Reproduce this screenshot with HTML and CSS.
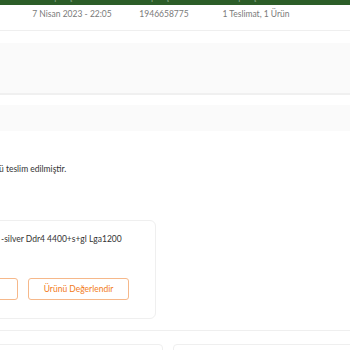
FILE: index.html
```html
<!DOCTYPE html>
<html lang="tr">
<head>
<meta charset="utf-8">
<link rel="stylesheet" href="styles.css">
</head>
<body>
<div class="summary">
  <div class="summary-head">
    <span>Sipariş Tarihi</span>
    <span>Sipariş No</span>
    <span>Sipariş Özeti</span>
  </div>
  <div class="summary-values">
    <span>7 Nisan 2023 - 22:05</span>
    <span>1946658775</span>
    <span>1 Teslimat, 1 Ürün</span>
  </div>
</div>
<div class="band band-tall"></div>
<div class="band band-short"></div>
<p class="status">ü teslim edilmiştir.</p>
<div class="product-card">
  <p class="product-name">-silver Ddr4 4400+s+gl Lga1200</p>
  <div class="actions">
    <button class="btn btn-cut">Kargo Takip</button>
    <button class="btn">Ürünü Değerlendir</button>
  </div>
</div>
<div class="divider"></div>
<div class="bottom-cards">
  <div class="mini-card mini-left"></div>
  <div class="mini-card mini-right"></div>
</div>
</body>
</html>
```
FILE: styles.css
```css
html, body {
  margin: 0;
  padding: 0;
  background: #ffffff;
  font-family: Lato, "Open Sans", sans-serif;
  overflow: hidden;
  width: 350px;
  height: 350px;
}

.summary {
  border-bottom: 1px solid #efefef;
}

.summary-head {
  background: #2c5d28;
  height: 24px;
  margin-top: -19px;
  display: grid;
  grid-template-columns: repeat(3, 92px);
  padding-left: 26px;
  align-items: end;
  font-size: 9px;
  line-height: 12px;
  color: rgba(255, 255, 255, 0.45);
  text-align: center;
  padding-bottom: 2px;
  box-sizing: border-box;
}

.summary-values {
  display: grid;
  grid-template-columns: repeat(3, 92px);
  padding-left: 26px;
  height: 25px;
  box-sizing: border-box;
  padding-top: 4px;
  font-size: 8.5px;
  line-height: 11px;
  color: #7a7a7a;
  text-align: center;
}

.band {
  background: #fafafa;
}

.band-tall {
  margin-top: 12px;
  height: 50px;
  border-bottom: 2px solid #f0f0f0;
}

.band-short {
  margin-top: 10px;
  height: 26px;
}

.status {
  margin: 32px 0 0 -1px;
  font-size: 8.5px;
  line-height: 12px;
  color: #333333;
}

.product-card {
  margin-top: 45px;
  margin-left: -10px;
  width: 166px;
  height: 99px;
  box-sizing: border-box;
  border: 1px solid #efefef;
  border-radius: 6px;
  padding: 12px 0 0 10px;
  display: flex;
  flex-direction: column;
}

.product-name {
  margin: 0;
  font-size: 8.5px;
  line-height: 12px;
  color: #333333;
}

.actions {
  margin-top: 33px;
  display: flex;
  gap: 10px;
  margin-left: -80px;
}

.btn {
  flex-shrink: 0;
  height: 22px;
  width: 101px;
  border: 1px solid #f6b88a;
  border-radius: 3px;
  background: #ffffff;
  color: #f27a1a;
  font-family: Lato, "Open Sans", sans-serif;
  font-size: 8.5px;
  padding: 0;
}

.btn-cut {
  width: 97px;
}

.divider {
  margin-top: 11px;
  height: 1px;
  background: #efefef;
}

.bottom-cards {
  margin-top: 13px;
  display: flex;
  gap: 10px;
  margin-left: -20px;
}

.mini-card {
  flex-shrink: 0;
  height: 40px;
  border: 1px solid #efefef;
  border-radius: 4px;
  box-sizing: border-box;
}

.mini-left {
  width: 183px;
}

.mini-right {
  width: 200px;
}
```
